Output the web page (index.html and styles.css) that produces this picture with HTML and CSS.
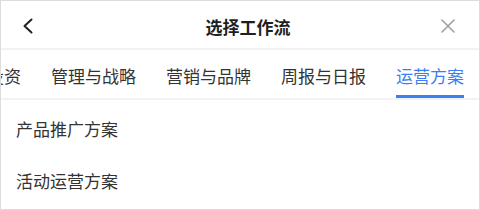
FILE: index.html
```html
<!DOCTYPE html>
<html lang="zh-CN">
<head>
<meta charset="utf-8">
<link rel="stylesheet" href="styles.css">
</head>
<body>
<div class="panel">
  <div class="header">
    <div class="header-left">
      <svg class="icon-back" width="12" height="16" viewBox="0 0 12 16"><polyline points="9.5,1.5 2.5,8 9.5,14.5" fill="none" stroke="#222" stroke-width="2" stroke-linecap="round" stroke-linejoin="round"/></svg>
    </div>
    <div class="title">选择工作流</div>
    <div class="header-right">
      <svg class="icon-close" width="14" height="14" viewBox="0 0 14 14"><path d="M1 1 L13 13 M13 1 L1 13" stroke="#9aa0a8" stroke-width="1.6" stroke-linecap="round"/></svg>
    </div>
  </div>
  <div class="tabs">
    <div class="tab">投资</div>
    <div class="tab">管理与战略</div>
    <div class="tab">营销与品牌</div>
    <div class="tab">周报与日报</div>
    <div class="tab active"><span class="tab-label">运营方案</span></div>
  </div>
  <ul class="list">
    <li class="item">产品推广方案</li>
    <li class="item">活动运营方案</li>
  </ul>
</div>
</body>
</html>
```

FILE: styles.css
```css
* { box-sizing: border-box; }
html, body { margin: 0; padding: 0; background: #fff; }
body { font-family: "Noto Sans CJK SC", "Noto Sans", sans-serif; color: #333; }
.panel {
  width: 480px;
  height: 210px;
  border: 1px solid #dcdcdc;
  overflow: hidden;
  background: #fff;
}
.header {
  height: 49px;
  display: grid;
  grid-template-columns: 63px 1fr 47px;
  align-items: center;
  border-bottom: 2px solid #f2f2f2;
}
.header-left { padding-left: 21px; padding-top: 2px; display: flex; align-items: center; }
.header-right { padding-left: 9px; padding-top: 2px; display: flex; align-items: center; }
.title {
  text-align: center;
  font-size: 17px;
  font-weight: 700;
  color: #1f1f1f;
  padding-top: 4px;
}
.tabs {
  height: 50px;
  display: flex;
  justify-content: flex-end;
  overflow: hidden;
  border-bottom: 2px solid #f2f2f2;
}
.tab {
  flex: none;
  padding: 3px 15px 0;
  font-size: 17px;
  color: #333;
  display: flex;
  align-items: center;
  white-space: nowrap;
}
.tab.active { color: #3a7ef2; align-items: stretch; padding-top: 0; }
.tab-label {
  display: flex;
  align-items: center;
  border-bottom: 3px solid #3a7ef2;
  padding-top: 6px;
}
.list { list-style: none; margin: 0; padding: 2px 0 0 0; }
.item {
  height: 52px;
  display: flex;
  align-items: center;
  padding-left: 15px;
  font-size: 17px;
  color: #333;
}
```
